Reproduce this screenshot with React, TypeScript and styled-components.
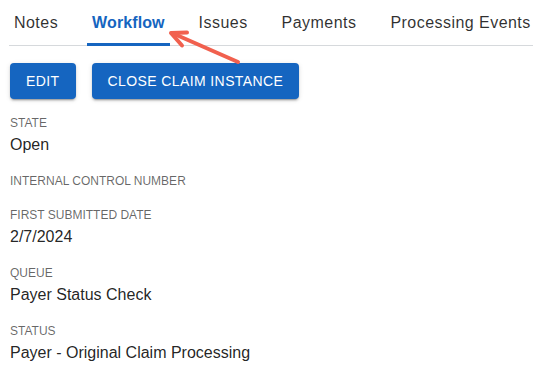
import React from 'react'
import styled, { createGlobalStyle } from 'styled-components'

const GlobalStyle = createGlobalStyle`
  body {
    margin: 0;
    background: #fff;
    font-family: "Liberation Sans", Arial, Helvetica, sans-serif;
  }
`

const tabs = ['Notes', 'Workflow', 'Issues', 'Payments', 'Processing Events']

const fields: { label: string, value?: string }[] = [
  { label: 'State', value: 'Open' },
  { label: 'Internal Control Number' },
  { label: 'First Submitted Date', value: '2/7/2024' },
  { label: 'Queue', value: 'Payer Status Check' },
  { label: 'Status', value: 'Payer - Original Claim Processing' },
]

const App: React.FC = () => {
  return (
    <StyledPage>
      <GlobalStyle />
      <StyledTabBar>
        {tabs.map(t => (
          <StyledTab key={t} active={t === 'Workflow'}>{t}</StyledTab>
        ))}
      </StyledTabBar>
      <StyledActions>
        <StyledButton>Edit</StyledButton>
        <StyledButton>Close Claim Instance</StyledButton>
      </StyledActions>
      {fields.map(f => (
        <StyledField key={f.label}>
          <StyledLabel>{f.label}</StyledLabel>
          <StyledValue>{f.value}</StyledValue>
        </StyledField>
      ))}
      {/* callout arrow pointing at the active tab */}
      <StyledArrow width="533" height="377" viewBox="0 0 533 377">
        <g stroke="#f1604e" strokeWidth="4" strokeLinecap="round" strokeLinejoin="round" fill="none">
          <line x1="238" y1="62" x2="172" y2="33" />
          <polyline points="187,32.5 171,33 182,45.5" />
        </g>
      </StyledArrow>
    </StyledPage>
  )
}

const StyledPage = styled.div`
  position: relative;
  width: 533px;
  height: 377px;
  padding: 0 0 0 10px;
  box-sizing: border-box;
  overflow: hidden;
`

const StyledTabBar = styled.div`
  display: flex;
  gap: 24px;
  height: 46px;
  margin-left: -1px;
  border-bottom: 1px solid #d6d9dc;
  box-sizing: border-box;
`

const StyledTab = styled.div<{ active?: boolean }>`
  position: relative;
  display: flex;
  align-items: center;
  padding: 0 5px;
  font-size: 16px;
  letter-spacing: ${props => props.active ? '0.1px' : '0.02857em'};
  font-weight: ${props => props.active ? 700 : 400};
  color: ${props => props.active ? '#1565c0' : 'rgba(0, 0, 0, 0.82)'};
  white-space: nowrap;
  &::after {
    content: '';
    display: ${props => props.active ? 'block' : 'none'};
    position: absolute;
    left: 0;
    right: 0;
    bottom: -1px;
    height: 3px;
    background: #1565c0;
  }
`

const StyledActions = styled.div`
  display: flex;
  gap: 16px;
  margin-top: 17px;
  margin-bottom: 14px;
`

const StyledButton = styled.button`
  height: 36px;
  padding: 0 16px;
  border: none;
  border-radius: 4px;
  background: #1565c0;
  color: #fff;
  font-family: "Liberation Sans", Arial, Helvetica, sans-serif;
  font-size: 14px;
  font-weight: 400;
  letter-spacing: 0.02857em;
  text-transform: uppercase;
  box-shadow: 0 3px 1px -2px rgba(0,0,0,0.2), 0 2px 2px 0 rgba(0,0,0,0.14), 0 1px 5px 0 rgba(0,0,0,0.12);
`

const StyledField = styled.div`
  margin-bottom: 14px;
`

const StyledLabel = styled.div`
  font-size: 12px;
  line-height: 20px;
  color: rgba(0, 0, 0, 0.6);
  text-transform: uppercase;
`

const StyledValue = styled.div`
  font-size: 16px;
  line-height: 24px;
  color: rgba(0, 0, 0, 0.87);
`

const StyledArrow = styled.svg`
  position: absolute;
  top: 0;
  left: 0;
  pointer-events: none;
`

export default App
